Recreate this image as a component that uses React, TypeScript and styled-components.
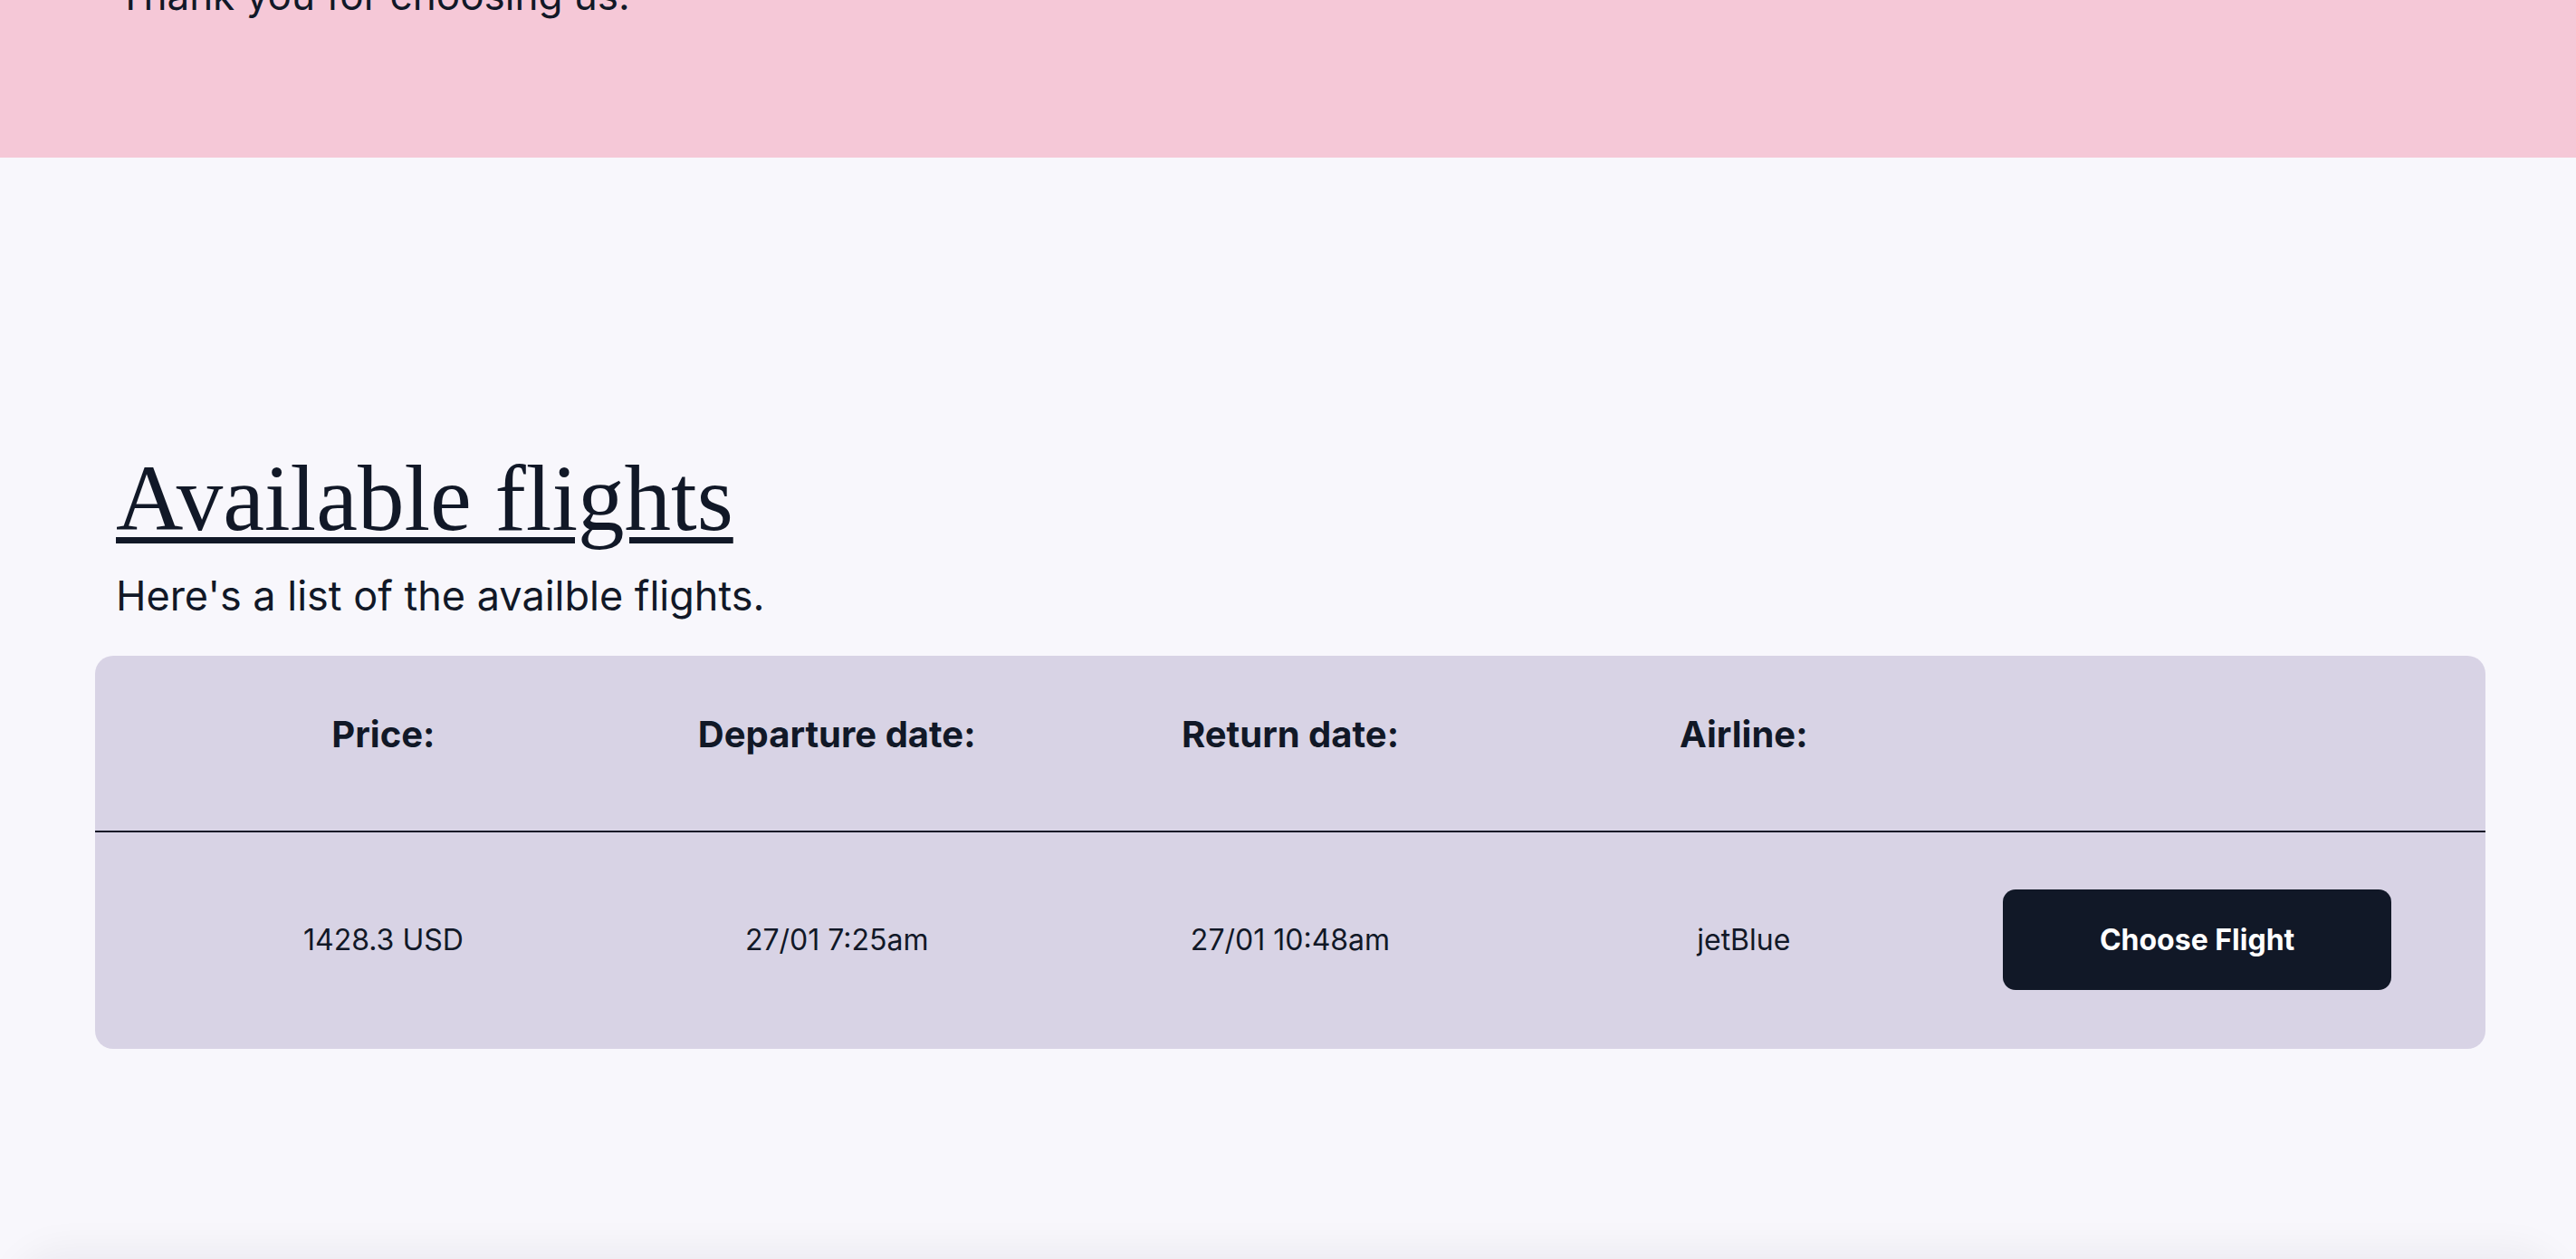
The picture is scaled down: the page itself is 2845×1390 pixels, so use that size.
import React from "react";
import styled, { createGlobalStyle } from "styled-components";

const GlobalStyle = createGlobalStyle`
  html, body {
    margin: 0;
    padding: 0;
    background: #f8f7fc;
    color: #111827;
    font-family: Inter, "Noto Sans", sans-serif;
  }
  * { box-sizing: border-box; }
`;

const Page = styled.div`
  display: flex;
  flex-direction: column;
  min-height: 100vh;
`;

const Hero = styled.section`
  margin-top: -62px;
  min-height: 236px;
  padding: 33px 130px 0;
  background: #f5c8d7;
`;

const HeroText = styled.p`
  margin: 0;
  font-size: 44px;
  line-height: 48px;
  color: #111827;
`;

const Main = styled.main`
  display: flex;
  flex-direction: column;
  padding: 325px 100px 0 105px;
`;

const Intro = styled.div`
  display: flex;
  flex-direction: column;
  gap: 33px;
  padding-left: 23px;
  margin-bottom: 42px;
`;

const Title = styled.h1`
  margin: 0;
  font-family: "Liberation Serif", "Times New Roman", serif;
  font-weight: 400;
  font-size: 103px;
  line-height: 102px;
  text-decoration: underline;
  text-decoration-thickness: 7px;
  text-underline-offset: 8px;
  color: #111827;
`;

const Subtitle = styled.p`
  margin: 0;
  font-size: 45px;
  line-height: 48px;
  color: #111827;
`;

const Card = styled.div`
  display: flex;
  flex-direction: column;
  background: #d8d3e5;
  border-radius: 20px;
  overflow: hidden;
`;

const Row = styled.div<{ $head?: boolean }>`
  display: grid;
  grid-template-columns: repeat(5, 1fr);
  align-items: center;
  padding: ${(p) => (p.$head ? "63px 68px 82px" : "63px 68px 65px")};
  border-bottom: ${(p) => (p.$head ? "2px solid #111827" : "none")};
`;

const HeadCell = styled.div`
  text-align: center;
  font-weight: 700;
  font-size: 40px;
  line-height: 48px;
`;

const Cell = styled.div`
  display: flex;
  justify-content: center;
  font-size: 32px;
  line-height: 38px;
`;

const Button = styled.button`
  width: 429px;
  height: 111px;
  border: none;
  border-radius: 14px;
  background: #111827;
  color: #ffffff;
  font-family: Inter, "Noto Sans", sans-serif;
  font-weight: 700;
  font-size: 32px;
  cursor: pointer;
`;

const Footer = styled.footer`
  margin: 232px 12px 0;
  height: 200px;
  border-radius: 60px 60px 0 0;
  background: #f8f7fc;
  box-shadow: 0 -12px 40px rgba(17, 24, 39, 0.05);
`;

const flights = [
  { price: "1428.3 USD", dep: "27/01 7:25am", ret: "27/01 10:48am", airline: "jetBlue" },
];

export default function App() {
  return (
    <Page>
      <GlobalStyle />
      <Hero>
        <HeroText>Thank you for choosing us.</HeroText>
      </Hero>
      <Main>
        <Intro>
          <Title>Available flights</Title>
          <Subtitle>Here's a list of the availble flights.</Subtitle>
        </Intro>
        <Card>
          <Row $head>
            <HeadCell>Price:</HeadCell>
            <HeadCell>Departure date:</HeadCell>
            <HeadCell>Return date:</HeadCell>
            <HeadCell>Airline:</HeadCell>
            <HeadCell />
          </Row>
          {flights.map((f) => (
            <Row key={f.price}>
              <Cell>{f.price}</Cell>
              <Cell>{f.dep}</Cell>
              <Cell>{f.ret}</Cell>
              <Cell>{f.airline}</Cell>
              <Cell>
                <Button>Choose Flight</Button>
              </Cell>
            </Row>
          ))}
        </Card>
      </Main>
      <Footer />
    </Page>
  );
}
